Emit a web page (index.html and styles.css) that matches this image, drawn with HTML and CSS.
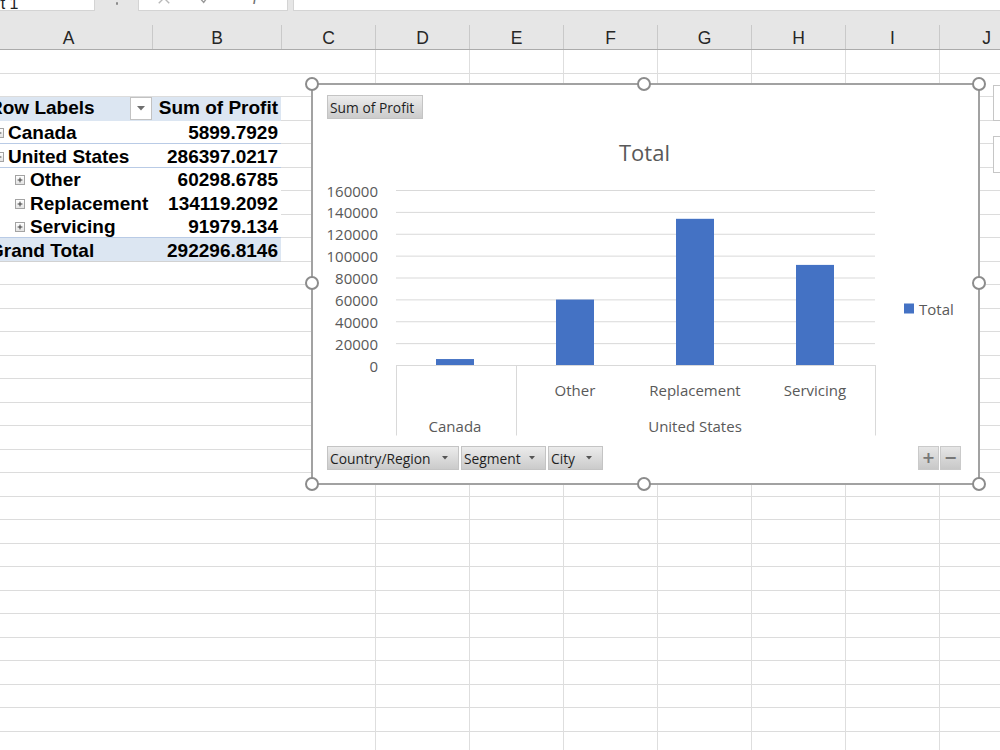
FILE: index.html
```html
<!DOCTYPE html>
<html lang="en">
<head>
<meta charset="utf-8">
<title>Pivot chart</title>
<link rel="stylesheet" href="styles.css">
</head>
<body>
<div class="topbar">
  <div class="namebox"><span class="namebox-text">Chart 1</span></div>
  <div class="grip"><span class="grip-dot"></span></div>
  <div class="fxbtns">
    <svg class="ico ico-x" viewBox="0 0 16 16"><path d="M2 2 L14 14 M14 2 L2 14"/></svg>
    <svg class="ico ico-check" viewBox="0 0 16 16"><path d="M2 8 L6.5 13 L14 3"/></svg>
    <span class="fx">fx</span>
  </div>
  <div class="formula"></div>
</div>

<div class="colheads">
  <div class="ch ch-a">A</div>
  <div class="ch ch-b">B</div>
  <div class="ch">C</div>
  <div class="ch">D</div>
  <div class="ch">E</div>
  <div class="ch">F</div>
  <div class="ch">G</div>
  <div class="ch">H</div>
  <div class="ch">I</div>
  <div class="ch">J</div>
</div>

<div class="sheet">
  <div class="col"></div><div class="col"></div><div class="col"></div><div class="col"></div><div class="col"></div>
  <div class="col"></div><div class="col"></div><div class="col"></div><div class="col"></div><div class="col"></div>

  <div class="pivot">
    <div class="prow phead">
      <div class="plabel">Row Labels<span class="pdrop"><svg viewBox="0 0 8 5"><path d="M0 0 H8 L4 4.5 Z"/></svg></span></div>
      <div class="pval">Sum of Profit</div>
    </div>
    <div class="prow psep">
      <div class="plabel lvl1"><span class="pbox"><svg viewBox="0 0 10 10"><path d="M2 5 H8"/></svg></span>Canada</div>
      <div class="pval">5899.7929</div>
    </div>
    <div class="prow psep">
      <div class="plabel lvl1"><span class="pbox"><svg viewBox="0 0 10 10"><path d="M2 5 H8"/></svg></span>United States</div>
      <div class="pval">286397.0217</div>
    </div>
    <div class="prow">
      <div class="plabel lvl2"><span class="pbox"><svg viewBox="0 0 10 10"><path d="M2 5 H8 M5 2 V8"/></svg></span>Other</div>
      <div class="pval">60298.6785</div>
    </div>
    <div class="prow">
      <div class="plabel lvl2"><span class="pbox"><svg viewBox="0 0 10 10"><path d="M2 5 H8 M5 2 V8"/></svg></span>Replacement</div>
      <div class="pval">134119.2092</div>
    </div>
    <div class="prow psep">
      <div class="plabel lvl2"><span class="pbox"><svg viewBox="0 0 10 10"><path d="M2 5 H8 M5 2 V8"/></svg></span>Servicing</div>
      <div class="pval">91979.134</div>
    </div>
    <div class="prow ptotal">
      <div class="plabel">Grand Total</div>
      <div class="pval">292296.8146</div>
    </div>
  </div>
</div>

<div class="chart">
  <div class="chart-top">
    <div class="fbtn fbtn-value">Sum of Profit</div>
  </div>
  <div class="chart-title">Total</div>
  <svg class="plot" viewBox="0 0 665 271" width="665" height="271">
    <g class="grid">
      <line x1="83" y1="21.5" x2="562" y2="21.5"/>
      <line x1="83" y1="43.375" x2="562" y2="43.375"/>
      <line x1="83" y1="65.25" x2="562" y2="65.25"/>
      <line x1="83" y1="87.125" x2="562" y2="87.125"/>
      <line x1="83" y1="109" x2="562" y2="109"/>
      <line x1="83" y1="130.875" x2="562" y2="130.875"/>
      <line x1="83" y1="152.75" x2="562" y2="152.75"/>
      <line x1="83" y1="174.625" x2="562" y2="174.625"/>
    </g>
    <g class="ylabels">
      <text x="65" y="21.5">160000</text>
      <text x="65" y="43.375">140000</text>
      <text x="65" y="65.25">120000</text>
      <text x="65" y="87.125">100000</text>
      <text x="65" y="109">80000</text>
      <text x="65" y="130.875">60000</text>
      <text x="65" y="152.75">40000</text>
      <text x="65" y="174.625">20000</text>
      <text x="65" y="196.5">0</text>
    </g>
    <g class="bars">
      <rect x="123" y="190.05" width="38" height="6.45"/>
      <rect x="243" y="130.55" width="38" height="65.95"/>
      <rect x="363" y="49.81" width="38" height="146.69"/>
      <rect x="483" y="95.9" width="38" height="100.6"/>
    </g>
    <g class="axis">
      <line x1="83" y1="196.5" x2="563" y2="196.5"/>
      <line x1="83.5" y1="196.5" x2="83.5" y2="266.5"/>
      <line x1="203.5" y1="196.5" x2="203.5" y2="266.5"/>
      <line x1="562.5" y1="196.5" x2="562.5" y2="266.5"/>
    </g>
    <g class="xlabels">
      <text x="262" y="220.5">Other</text>
      <text x="382" y="220.5">Replacement</text>
      <text x="502" y="220.5">Servicing</text>
      <text x="142" y="256.5">Canada</text>
      <text x="382" y="256.5">United States</text>
    </g>
    <g class="legend">
      <rect x="591" y="134.5" width="10" height="10"/>
      <text x="606" y="139.5">Total</text>
    </g>
  </svg>
  <div class="chart-bottom">
    <div class="fbtn fbtn-country">Country/Region<svg class="farrow" viewBox="0 0 6 4"><path d="M0 0 H6 L3 3.5 Z"/></svg></div>
    <div class="fbtn fbtn-segment">Segment<svg class="farrow" viewBox="0 0 6 4"><path d="M0 0 H6 L3 3.5 Z"/></svg></div>
    <div class="fbtn fbtn-city">City<svg class="farrow" viewBox="0 0 6 4"><path d="M0 0 H6 L3 3.5 Z"/></svg></div>
    <div class="zoombtns">
      <div class="zbtn">+</div>
      <div class="zbtn">&minus;</div>
    </div>
  </div>

  <span class="handle h-tl"></span>
  <span class="handle h-tc"></span>
  <span class="handle h-tr"></span>
  <span class="handle h-ml"></span>
  <span class="handle h-mr"></span>
  <span class="handle h-bl"></span>
  <span class="handle h-bc"></span>
  <span class="handle h-br"></span>
</div>

<div class="side-btn side-btn-1"></div>
<div class="side-btn side-btn-2"></div>
</body>
</html>
```

FILE: styles.css
```css
html, body {
  margin: 0;
  padding: 0;
}
body {
  width: 1000px;
  height: 750px;
  overflow: hidden;
  position: relative;
  background: #ffffff;
  font-family: "Liberation Sans", Arial, sans-serif;
  color: #000;
}

/* ---------- formula bar strip ---------- */
.topbar {
  display: flex;
  height: 12px;
  background: #e6e6e6;
  overflow: hidden;
}
.namebox {
  flex: none;
  width: 95px;
  height: 24px;
  margin-top: -13px;
  box-sizing: border-box;
  background: #fff;
  border: 1px solid #d4d4d4;
  border-left: none;
  overflow: hidden;
  white-space: nowrap;
  font-size: 16px;
  line-height: 16px;
  padding-top: 8px;
  color: #222;
}
.namebox-text {
  display: block;
  text-indent: -34px;
}
.grip {
  flex: none;
  width: 43px;
  display: flex;
  justify-content: center;
  align-items: flex-start;
  padding-top: 2px;
  box-sizing: border-box;
}
.grip-dot {
  width: 2px;
  height: 3px;
  background: #8a8a8a;
  border-radius: 1px;
}
.fxbtns {
  flex: none;
  width: 150px;
  height: 24px;
  margin-top: -13px;
  box-sizing: border-box;
  background: #fff;
  border: 1px solid #d4d4d4;
  display: flex;
  align-items: flex-start;
  padding-top: 3px;
}
.ico {
  width: 16px;
  height: 14px;
  fill: none;
  stroke-width: 1.6;
}
.ico-x {
  margin-left: 17px;
  stroke: #b8b8b8;
}
.ico-check {
  margin-left: 25px;
  stroke: #9a9a9a;
}
.fx {
  margin-left: 40px;
  margin-top: -6px;
  font-family: "Liberation Serif", serif;
  font-style: italic;
  font-size: 18px;
  line-height: 18px;
  color: #707070;
}
.formula {
  flex: 1;
  margin-left: 5px;
  height: 24px;
  margin-top: -13px;
  box-sizing: border-box;
  background: #fff;
  border: 1px solid #d4d4d4;
  border-right: none;
}

/* ---------- column headers ---------- */
.colheads {
  display: flex;
  margin-left: -15px;
  height: 38px;
  box-sizing: border-box;
  background: #e6e6e6;
  border-bottom: 1px solid #ababab;
}
.ch {
  flex: none;
  width: 94px;
  height: 24px;
  margin-top: 13px;
  box-sizing: border-box;
  border-right: 1px solid #c9c9c9;
  text-align: center;
  font-size: 17.5px;
  line-height: 26px;
  color: #262626;
}
.ch-a { width: 168px; }
.ch-b { width: 129px; }

/* ---------- sheet grid ---------- */
.sheet {
  display: grid;
  margin-left: -15px;
  grid-template-columns: 168px 129px repeat(8, 94px);
  grid-template-rows: repeat(30, 23.5px);
  background: repeating-linear-gradient(to bottom, #ffffff 0, #ffffff 22.5px, #dcdcdc 22.5px, #dcdcdc 23.5px);
}
.col {
  grid-row: 1 / -1;
  border-right: 1px solid #dedede;
}

/* ---------- pivot table ---------- */
.pivot {
  grid-column: 1 / 3;
  grid-row: 3 / 10;
  width: 296px;
  display: flex;
  flex-direction: column;
  background: #fff;
  font-weight: bold;
  font-size: 19px;
}
.prow {
  display: grid;
  grid-template-columns: 168px 128px;
  height: 23.5px;
  box-sizing: border-box;
  line-height: 22.5px;
  white-space: nowrap;
}
.phead, .ptotal {
  background: #dce6f2;
}
.psep {
  border-bottom: 1px solid #b9cbe6;
}
.ptotal {
  border-bottom: 1px solid #d2d2d2;
}
.plabel {
  display: flex;
  align-items: center;
  padding-left: 4px;
  overflow: hidden;
  height: 22.5px;
  box-sizing: border-box;
}
.lvl1 { padding-left: 9px; }
.lvl2 { padding-left: 30px; }
.pval {
  text-align: right;
  padding-right: 3px;
  height: 22.5px;
  box-sizing: border-box;
}
.prow:not(.phead) .plabel {
  padding-top: 3px;
}
.prow:not(.phead) .pval {
  padding-top: 1.5px;
}
.pbox {
  flex: none;
  width: 10px;
  height: 10px;
  box-sizing: border-box;
  border: 1px solid #a3a3a3;
  background: linear-gradient(#ffffff, #e3e3e3);
  margin-right: 4px;
  display: flex;
}
.lvl2 .pbox { margin-right: 5px; }
.pbox svg {
  width: 8px;
  height: 8px;
  fill: none;
  stroke: #3a3a3a;
  stroke-width: 1.2;
}
.pdrop {
  margin-left: auto;
  margin-right: 1px;
  width: 22px;
  height: 23px;
  box-sizing: border-box;
  border: 1px solid #c2c2c2;
  background: #fff;
  display: flex;
  align-items: center;
  justify-content: center;
}
.pdrop svg {
  width: 8px;
  height: 5px;
  fill: #6f6f6f;
}

/* ---------- chart ---------- */
.chart {
  position: absolute;
  left: 311px;
  top: 83px;
  width: 669px;
  height: 402px;
  box-sizing: border-box;
  border: 2px solid #a2a2a2;
  background: #fff;
  font-family: "Open Sans", "Noto Sans", sans-serif;
  color: #595959;
}
.chart-top {
  padding: 10px 0 0 14px;
  display: flex;
}
.fbtn {
  flex: none;
  height: 24px;
  box-sizing: border-box;
  display: flex;
  align-items: center;
  background: linear-gradient(#ececec, #cbcbcb);
  border: 1px solid #c4c4c4;
  font-size: 13.8px;
  color: #1f1f1f;
  padding-left: 2px;
  white-space: nowrap;
}
.fbtn-value {
  width: 96px;
}
.chart-title {
  margin-top: 17.5px;
  height: 30px;
  text-align: center;
  font-size: 22px;
  line-height: 30px;
  color: #595959;
  padding-right: 2px;
}
.plot {
  display: block;
  margin-top: 2px;
}
.plot .grid line {
  stroke: #d9d9d9;
  stroke-width: 1;
}
.plot .axis line {
  stroke: #d9d9d9;
  stroke-width: 1;
}
.plot text {
  font-family: "Open Sans", "Noto Sans", sans-serif;
  font-size: 15px;
  fill: #595959;
  dominant-baseline: central;
}
.plot .ylabels text {
  text-anchor: end;
}
.plot .xlabels text {
  text-anchor: middle;
}
.plot .bars rect,
.plot .legend rect {
  fill: #4472c4;
}
.chart-bottom {
  margin-top: 6.5px;
  padding-left: 14px;
  display: flex;
  gap: 2px;
}
.fbtn-country { width: 132px; }
.fbtn-segment { width: 85px; }
.fbtn-city { width: 55px; }
.farrow {
  margin-left: auto;
  margin-right: 10px;
  width: 6px;
  height: 4px;
  fill: #555;
}
.zoombtns {
  margin-left: auto;
  margin-right: 17px;
  display: flex;
  gap: 1px;
}
.zbtn {
  width: 21px;
  height: 24px;
  box-sizing: border-box;
  background: linear-gradient(#e6e6e6, #c8c8c8);
  border: 1px solid #cacaca;
  color: #777;
  font-family: "DejaVu Sans", sans-serif;
  font-weight: bold;
  font-size: 16px;
  line-height: 21px;
  text-align: center;
}

/* selection handles (overlay) */
.handle {
  position: absolute;
  width: 14px;
  height: 14px;
  box-sizing: border-box;
  border: 2px solid #8c8c8c;
  border-radius: 50%;
  background: #fff;
}
.h-tl { left: -8px; top: -8px; }
.h-tc { left: 324px; top: -8px; }
.h-tr { left: 659px; top: -8px; }
.h-ml { left: -8px; top: 191px; }
.h-mr { left: 659px; top: 191px; }
.h-bl { left: -8px; top: 392px; }
.h-bc { left: 324px; top: 392px; }
.h-br { left: 659px; top: 392px; }

/* chart side buttons, cut by window edge */
.side-btn {
  position: absolute;
  left: 993px;
  width: 24px;
  box-sizing: border-box;
  border: 1px solid #c6c6c6;
  background: #fff;
}
.side-btn-1 { top: 85px; height: 36px; }
.side-btn-2 { top: 136px; height: 37px; }
```
